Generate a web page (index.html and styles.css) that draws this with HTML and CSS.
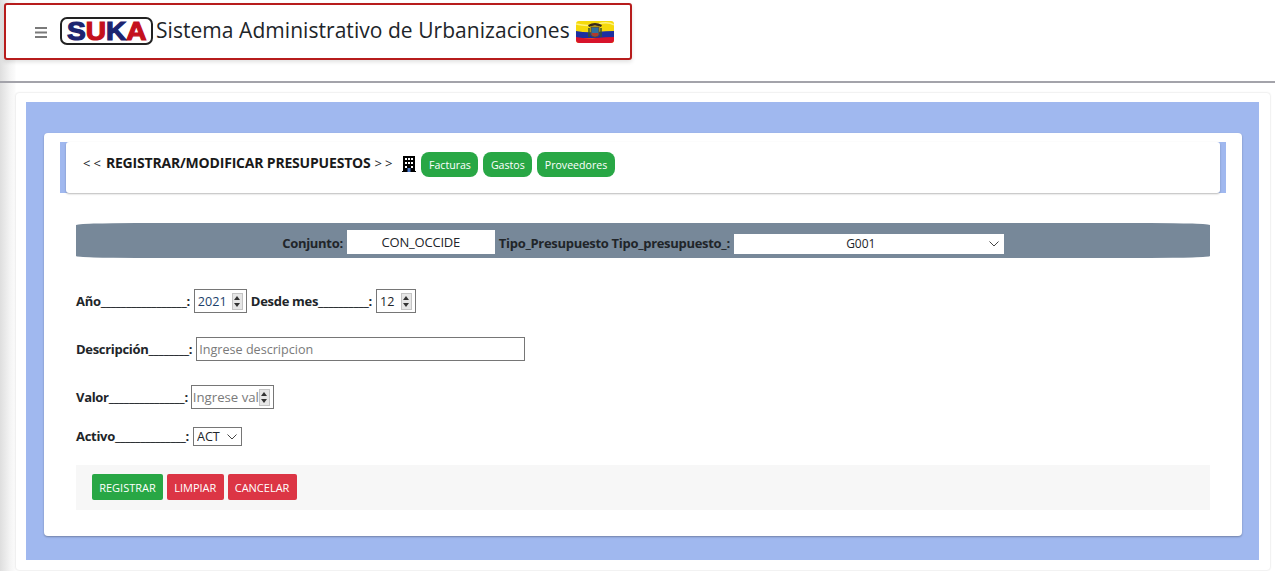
FILE: index.html
```html
<!DOCTYPE html>
<html lang="es">
<head>
<meta charset="utf-8">
<title>SUKA</title>
<link rel="stylesheet" href="styles.css">
</head>
<body>
<header class="topbar">
  <div class="brand">
    <svg class="burger" viewBox="0 0 12 11"><path d="M0 1h12M0 5.500h12M0 10h12" stroke="#7a7a7a" stroke-width="1.800"/></svg>
    <div class="logo"><span class="logo-text"><span class="navy">S</span><span class="red">U</span><span class="navy">K</span><span class="red">A</span></span></div>
    <h1 class="title">Sistema Administrativo de Urbanizaciones</h1>
    <svg class="flag" viewBox="0 0 38 22">
      <defs><clipPath id="flagclip"><rect width="38" height="22" rx="3"/></clipPath></defs>
      <g clip-path="url(#flagclip)">
        <rect width="38" height="22" fill="#f5d90a"/>
        <path d="M0 10 Q10 12 20 11 T38 10V17H0Z" fill="#1b2fa0"/>
        <path d="M0 16 Q10 18 20 17 T38 16V22H0Z" fill="#d8132b"/>
        <path d="M0 3 Q12 6 22 3 T38 4" stroke="#fff27a" stroke-width="1.500" fill="none"/>
        <path d="M12 4q7-4 14 0l-1 2q-6-3-12 0z" fill="#3a2a1a"/>
        <path d="M15 6h8v8q-4 4-8 0z" fill="#2e6f9e" stroke="#6b4a1f" stroke-width="1"/>
        <path d="M16 12h6v2q-3 2.500-6 0z" fill="#b3382c"/>
        <path d="M13 7v9M25 7v9" stroke="#39552a" stroke-width="1.500"/>
      </g>
    </svg>
  </div>
</header>
<main class="panel">
  <div class="blue">
    <section class="card">
      <div class="strip">
        <div class="strip-inner">
          <span class="arrows">&lt;&lt;</span>
          <strong class="heading">REGISTRAR/MODIFICAR PRESUPUESTOS</strong>
          <span class="arrows">&gt;&gt;</span>
          <svg class="building" viewBox="0 0 14 16">
            <path d="M1 0h12v15h1v1H0v-1h1z" fill="#000"/>
            <path d="M3 2h2v2H3zM6 2h2v2H6zM9 2h2v2H9zM3 6h2v2H3zM6 6h2v2H6zM9 6h2v2H9zM3 10h2v2H3zM9 10h2v2H9z" fill="#fff"/>
            <path d="M5.500 12h3v4h-3z" fill="#4a78c8"/>
          </svg>
          <a class="pill">Facturas</a>
          <a class="pill">Gastos</a>
          <a class="pill">Proveedores</a>
        </div>
      </div>
      <form class="form">
        <div class="selector">
          <label class="lbl">Conjunto:</label>
          <input class="conjunto" value="CON_OCCIDE">
          <label class="lbl">Tipo_Presupuesto Tipo_presupuesto_:</label>
          <select class="tipo"><option>G001</option></select>
        </div>
        <div class="row row-first">
          <label class="lbl">Año_________________:</label>
          <div class="num num-year"><input class="num-field num-blue" value="2021"><span class="spin"><i class="up"></i><i class="down"></i></span></div>
          <label class="lbl">Desde mes__________:</label>
          <div class="num num-month"><input class="num-field" value="12"><span class="spin"><i class="up"></i><i class="down"></i></span></div>
        </div>
        <div class="row">
          <label class="lbl">Descripción________:</label>
          <input class="desc" placeholder="Ingrese descripcion">
        </div>
        <div class="row">
          <label class="lbl">Valor_______________:</label>
          <div class="num num-valor"><input class="num-field" placeholder="Ingrese valor"><span class="spin"><i class="up"></i><i class="down"></i></span></div>
        </div>
        <div class="row row-active">
          <label class="lbl">Activo______________:</label>
          <select class="activo"><option>ACT</option></select>
        </div>
        <div class="actions">
          <button type="button" class="btn green">REGISTRAR</button>
          <button type="button" class="btn crimson">LIMPIAR</button>
          <button type="button" class="btn crimson">CANCELAR</button>
        </div>
      </form>
    </section>
  </div>
</main>
</body>
</html>
```
FILE: styles.css
```css
* { box-sizing: border-box; }
html, body { height: 100%; }
body {
  margin: 0;
  overflow: hidden;
  background: linear-gradient(to right, #dedede, #f4f4f4 10px, #fbfbfb 15px, #fff 16px);
  font-family: "Open Sans", "Noto Sans", sans-serif;
  color: #212529;
  font-size: 13px;
}
.topbar {
  height: 83px;
  padding: 3px 0 0 4px;
  border-bottom: 2px solid #a3a3aa;
}
.brand {
  width: 628px;
  height: 57px;
  display: flex;
  align-items: center;
  padding: 0 0 4px 29px;
  background: #fff;
  border: 2px solid #b71c1c;
  border-radius: 3px;
  box-shadow: 0 2px 4px rgba(0,0,0,.12);
}
.burger { width: 12px; height: 11px; flex: none; margin: 5px 13px 0 0; }
.logo {
  width: 93px;
  height: 28px;
  flex: none;
  margin-top: 2px;
  border: 2px solid #222;
  border-radius: 7px;
  background: #fff;
  font: 900 26px/24px "Liberation Sans", sans-serif;
  -webkit-text-stroke: 1.200px currentColor;
  text-align: center;
  overflow: hidden;
}
.logo-text { display: inline-block; transform: scaleX(1.08); }
.navy { color: #1c2470; }
.red { color: #c4101c; }
.title {
  margin: 0 6px 0 3px;
  font-size: 21px;
  font-weight: 400;
  white-space: nowrap;
  letter-spacing: .05px;
}
.flag { width: 38px; height: 22px; flex: none; margin-top: 4px; }
.panel {
  margin: 10px 5px 0 16px;
  height: 477px;
  padding: 9px 11px 10px 10px;
  background: #fff;
  border-radius: 3px;
  box-shadow: 0 0 2px rgba(0,0,0,.2);
}
.blue {
  height: 458px;
  padding: 31px 17px 24px 18px;
  background: #a0b8ef;
}
.card {
  height: 403px;
  padding: 9px 16px 0;
  background: #fff;
  border-radius: 4px;
  box-shadow: 0 1px 2px rgba(0,0,0,.3);
}
.strip {
  height: 51px;
  padding: 0 6px;
  background: #a0b8ef;
}
.strip-inner {
  height: 51px;
  display: flex;
  align-items: center;
  padding: 0 0 10px 17px;
  background: #fff;
  border-radius: 3px;
  box-shadow: 0 1px 2px rgba(0,0,0,.28);
}
.arrows { font-size: 13px; letter-spacing: 3px; white-space: nowrap; }
.heading { margin: 0 4px 0 2px; font-size: 14px; letter-spacing: -.19px; font-weight: 700; white-space: nowrap; color: #1a1a1a; }
.building { width: 14px; height: 16px; flex: none; margin: 3px 5px 0 7px; }
.pill {
  height: 25px;
  margin: 4px 5px 0 0;
  padding: 0 7.500px;
  display: flex;
  align-items: center;
  background: #28a745;
  color: #fff;
  border-radius: 8px;
  font-size: 10.600px;
  white-space: nowrap;
}
.form { padding: 30px 16px 0; }
.selector {
  height: 35px;
  display: flex;
  align-items: center;
  justify-content: center;
  padding-top: 4px;
  gap: 4px;
  background: #778899;
  border-radius: 60px / 2px;
}
.lbl { font-size: 13px; font-weight: 700; letter-spacing: -.3px; white-space: nowrap; }
.selector .lbl { color: #212529; }
.conjunto {
  width: 148px;
  height: 24px;
  margin-top: -2px;
  border: 0;
  background: #fff;
  font: 400 13px "Open Sans", sans-serif;
  letter-spacing: -.2px;
  text-align: center;
  color: #212529;
}
.tipo {
  width: 270px;
  height: 20px;
  margin-top: 2px;
  padding: 0 16px 0 0;
  border: 0;
  appearance: none;
  background: #fff url("data:image/svg+xml,%3Csvg xmlns='http://www.w3.org/2000/svg' width='10' height='6'%3E%3Cpath d='M.5 .5l4.500 4.500 4.500-4.500' fill='none' stroke='%23444' stroke-width='1'/%3E%3C/svg%3E") no-repeat right 5px center;
  font: 400 12px "Open Sans", sans-serif;
  text-align: center;
  color: #212529;
}
.row {
  height: 24px;
  margin-top: 24px;
  display: flex;
  align-items: center;
  gap: 4px;
}
.row-first { margin-top: 31px; }
.row-active { height: 19px; margin-top: 18px; }
.row-active .lbl { margin-top: -2px; }
.num {
  height: 24px;
  display: flex;
  align-items: center;
  border: 1px solid #767676;
  background: #fff;
}
.num-year { width: 53px; }
.num-month { width: 40px; }
.num-valor { width: 83px; margin-left: -1px; }
.num-field {
  min-width: 0;
  flex: 1;
  height: 22px;
  border: 0;
  outline: 0;
  padding: 0 0 0 3px;
  font: 400 12.600px "Open Sans", sans-serif;
  color: #212529;
  background: transparent;
}
.num-valor .num-field { padding-left: 1px; font-size: 13.200px; }
.num-blue { color: #1c3f6a; }
.num-field::placeholder, .desc::placeholder { color: #7a7a7a; opacity: 1; }
.spin {
  width: 11px;
  height: 17px;
  flex: none;
  margin-right: 3px;
  display: flex;
  flex-direction: column;
  background: #e6e6e6;
  border: 1px solid #c4c4c4;
}
.spin i { flex: 1; position: relative; display: block; }
.spin .up::after, .spin .down::after {
  content: "";
  position: absolute;
  left: 1.500px;
  top: 2px;
  border-left: 3px solid transparent;
  border-right: 3px solid transparent;
}
.spin .up::after { border-bottom: 4px solid #333; }
.spin .down::after { border-top: 4px solid #333; }
.desc {
  width: 329px;
  height: 24px;
  border: 1px solid #767676;
  padding: 0 2px;
  font: 400 12.600px "Open Sans", sans-serif;
}
.activo {
  width: 49px;
  height: 19px;
  padding: 0 0 0 3px;
  border: 1px solid #767676;
  border-radius: 0;
  appearance: none;
  background: #fff url("data:image/svg+xml,%3Csvg xmlns='http://www.w3.org/2000/svg' width='10' height='6'%3E%3Cpath d='M.5 .5l4.500 4.500 4.500-4.500' fill='none' stroke='%23444' stroke-width='1'/%3E%3C/svg%3E") no-repeat right 4px center;
  font: 400 12.600px "Open Sans", sans-serif;
  color: #212529;
}
.actions {
  height: 45px;
  margin-top: 19px;
  padding: 9px 16px;
  display: flex;
  gap: 4px;
  background: #f7f7f7;
}
.btn {
  height: 26px;
  padding: 0 7.200px;
  border: 0;
  border-radius: 2px;
  color: #fff;
  font: 400 11px "Open Sans", sans-serif;
}
.green { background: #28a745; }
.crimson { background: #dc3545; }
```
